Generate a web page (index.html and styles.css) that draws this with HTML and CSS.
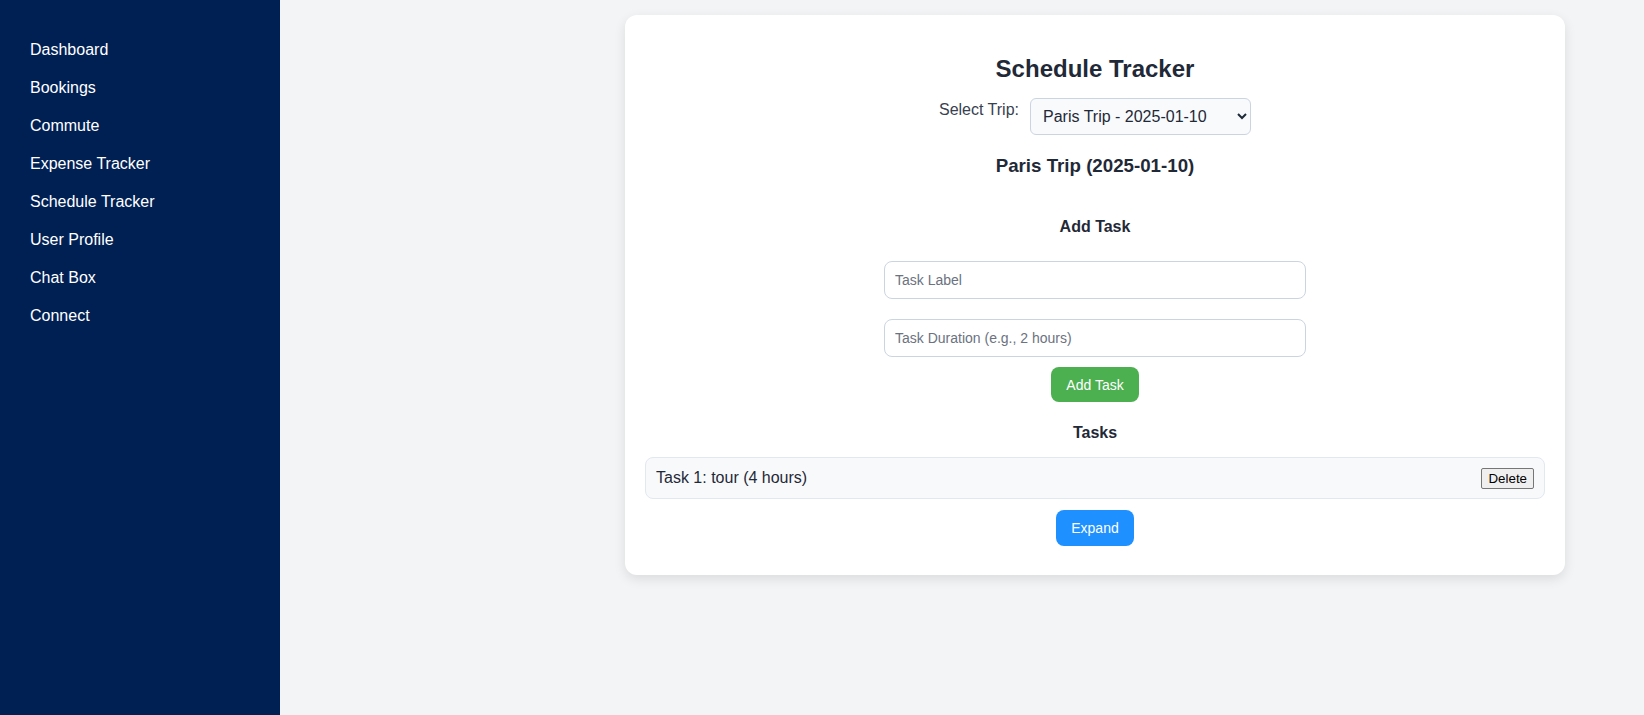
FILE: index.html
```html
<!DOCTYPE html>
<html lang="en">
<head>
<meta charset="utf-8">
<title>Schedule Tracker</title>
<link rel="stylesheet" href="styles.css">
</head>
<body>
<div class="layout">
  <nav class="sidebar">
    <ul class="nav-list">
      <li class="nav-item">Dashboard</li>
      <li class="nav-item">Bookings</li>
      <li class="nav-item">Commute</li>
      <li class="nav-item">Expense Tracker</li>
      <li class="nav-item">Schedule Tracker</li>
      <li class="nav-item">User Profile</li>
      <li class="nav-item">Chat Box</li>
      <li class="nav-item">Connect</li>
    </ul>
  </nav>
  <main class="main">
    <section class="card">
      <h2 class="title">Schedule Tracker</h2>
      <div class="trip-row">
        <label class="trip-label" for="trip">Select Trip:</label>
        <select class="trip-select" id="trip">
          <option>Paris Trip - 2025-01-10</option>
        </select>
      </div>
      <h3 class="trip-name">Paris Trip (2025-01-10)</h3>
      <h4 class="section-title add-title">Add Task</h4>
      <div class="form">
        <input class="text-input" type="text" placeholder="Task Label">
        <input class="text-input" type="text" placeholder="Task Duration (e.g., 2 hours)">
        <button class="btn btn-green" type="button">Add Task</button>
      </div>
      <h4 class="section-title tasks-title">Tasks</h4>
      <ul class="task-list">
        <li class="task-item">
          <span class="task-text">Task 1: tour (4 hours)</span>
          <button class="delete-btn" type="button">Delete</button>
        </li>
      </ul>
      <div class="expand-row">
        <button class="btn btn-blue" type="button">Expand</button>
      </div>
    </section>
  </main>
</div>
</body>
</html>
```
FILE: styles.css
```css
* { box-sizing: border-box; }

html, body {
  margin: 0;
  padding: 0;
  height: 100%;
}

body {
  font-family: "Liberation Sans", Arial, sans-serif;
  background: #f3f4f6;
  color: #1f2937;
}

.layout {
  display: flex;
  min-height: 100vh;
}

.sidebar {
  width: 280px;
  flex: 0 0 280px;
  background: #002054;
  padding: 31px 0 0 30px;
}

.nav-list {
  list-style: none;
  margin: 0;
  padding: 0;
}

.nav-item {
  color: #ffffff;
  font-size: 16px;
  line-height: 18px;
  padding: 10px 0;
}

.main {
  flex: 1;
  padding: 15px 79px 15px 345px;
}

.card {
  background: #ffffff;
  border-radius: 12px;
  box-shadow: 0 4px 12px rgba(0, 0, 0, 0.1);
  padding: 20px 20px 29px;
  text-align: center;
}

.title {
  font-size: 24px;
  font-weight: bold;
  margin: 20px 0 15px;
  line-height: 28px;
  color: #1f2937;
}

.trip-row {
  display: flex;
  justify-content: center;
  align-items: flex-start;
}

.trip-label {
  font-size: 16px;
  color: #374151;
  padding-top: 3px;
  margin-right: 11px;
}

.trip-select {
  width: 221px;
  height: 37px;
  font-family: "Liberation Sans", Arial, sans-serif;
  font-size: 16px;
  color: #1f2937;
  background: #f8fafc;
  border: 1px solid #cbd5e1;
  border-radius: 6px;
  padding: 0 6px 0 8px;
}

.trip-name {
  font-size: 18.72px;
  line-height: 22px;
  font-weight: bold;
  margin: 20px 0 0;
  color: #1f2937;
}

.section-title {
  font-size: 16px;
  line-height: 18px;
  font-weight: bold;
  color: #1f2937;
}

.add-title {
  margin: 41px 0 25px;
}

.form {
  display: flex;
  flex-direction: column;
  align-items: center;
}

.text-input {
  width: 422px;
  height: 38px;
  padding: 10px;
  border: 1px solid #cbd5e1;
  border-radius: 8px;
  font-family: "Liberation Sans", Arial, sans-serif;
  font-size: 14px;
  color: #1f2937;
  margin-bottom: 20px;
}

.text-input:nth-child(2) {
  margin-bottom: 10px;
}

.text-input::placeholder {
  color: #6b7280;
}

.btn {
  border: none;
  border-radius: 8px;
  color: #ffffff;
  font-family: "Liberation Sans", Arial, sans-serif;
  font-size: 14px;
  line-height: 16px;
  padding: 10px 15px;
}

.btn-green {
  background: #4caf50;
  padding: 10px 15px 9px;
}

.btn-blue {
  background: #1e90ff;
}

.tasks-title {
  margin: 22px 0 15px;
}

.task-list {
  list-style: none;
  margin: 0;
  padding: 0;
}

.task-item {
  display: flex;
  justify-content: space-between;
  align-items: center;
  background: #f8f9fb;
  border: 1px solid #e2e8f0;
  border-radius: 8px;
  padding: 10px;
  height: 42px;
}

.task-text {
  font-size: 16px;
  color: #1f2937;
}

.delete-btn {
  font-family: "Liberation Sans", Arial, sans-serif;
  font-size: 13.33px;
  color: #000000;
  background: #efefef;
  border: 1px solid #767676;
  border-radius: 2px;
  padding: 1px 6px;
  height: 21px;
  line-height: 17px;
}

.expand-row {
  margin-top: 11px;
}
```
